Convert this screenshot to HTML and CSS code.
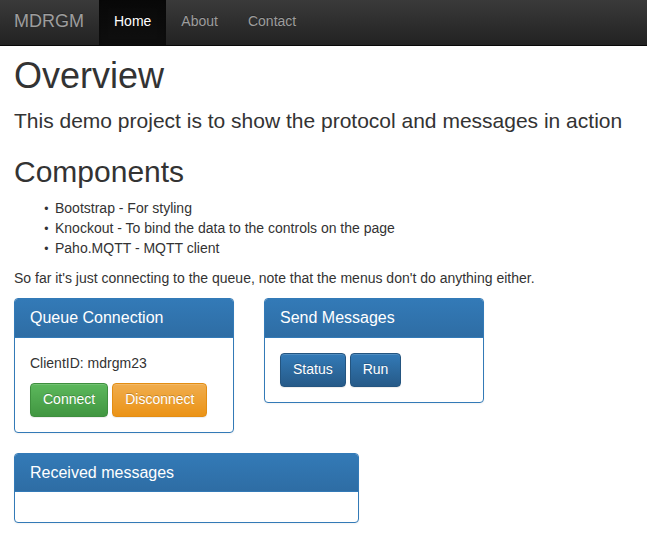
FILE: index.html
```html
<!DOCTYPE html>
<html>
<head>
<meta charset="utf-8">
<title>MDRGM</title>
<link rel="stylesheet" href="styles.css">
</head>
<body>
<nav class="navbar">
  <a class="brand" href="#">MDRGM</a>
  <ul class="nav">
    <li class="active"><a href="#">Home</a></li>
    <li><a href="#">About</a></li>
    <li><a href="#">Contact</a></li>
  </ul>
</nav>
<main class="container">
  <h1>Overview</h1>
  <p class="lead">This demo project is to show the protocol and messages in action</p>
  <h2>Components</h2>
  <ul class="list">
    <li>Bootstrap - For styling</li>
    <li>Knockout - To bind the data to the controls on the page</li>
    <li>Paho.MQTT - MQTT client</li>
  </ul>
  <p>So far it's just connecting to the queue, note that the menus don't do anything either.</p>
  <div class="row">
    <section class="panel panel-small">
      <div class="panel-heading"><h3 class="panel-title">Queue Connection</h3></div>
      <div class="panel-body">
        <p>ClientID: mdrgm23</p>
        <div class="btns">
          <button class="btn btn-success">Connect</button>
          <button class="btn btn-warning">Disconnect</button>
        </div>
      </div>
    </section>
    <section class="panel panel-small">
      <div class="panel-heading"><h3 class="panel-title">Send Messages</h3></div>
      <div class="panel-body">
        <div class="btns">
          <button class="btn btn-primary">Status</button>
          <button class="btn btn-primary">Run</button>
        </div>
      </div>
    </section>
  </div>
  <section class="panel panel-wide">
    <div class="panel-heading"><h3 class="panel-title">Received messages</h3></div>
    <div class="panel-body"></div>
  </section>
</main>
</body>
</html>
```
FILE: styles.css
```css
* { box-sizing: border-box; }
html, body { margin: 0; padding: 0; }
body {
  font-family: "Liberation Sans", Arial, sans-serif;
  font-size: 14px;
  line-height: 20px;
  color: #333;
  background: #fff;
}
.navbar {
  display: flex;
  align-items: stretch;
  height: 50px;
  margin: -4px 0 0 -1px;
  background-image: linear-gradient(to bottom, #3c3c3c 0, #222 100%);
  border-bottom: 1px solid #080808;
}
.brand {
  padding: 15px 15px;
  font-size: 18px;
  line-height: 20px;
  color: #9d9d9d;
  text-decoration: none;
  text-shadow: 0 -1px 0 rgba(0,0,0,.25);
}
.nav {
  display: flex;
  margin: 0;
  padding: 0;
  list-style: none;
}
.nav li a {
  display: block;
  padding: 15px 15px;
  height: 49px;
  line-height: 20px;
  color: #9d9d9d;
  text-decoration: none;
  text-shadow: 0 -1px 0 rgba(0,0,0,.25);
}
.nav li.active a {
  color: #fff;
  background-image: linear-gradient(to bottom, #080808 0, #0f0f0f 100%);
  box-shadow: inset 0 3px 9px rgba(0,0,0,.25);
}
.container {
  padding: 0 14px;
}
h1 {
  margin: 10px 0 10px;
  font-size: 36px;
  line-height: 1.1;
  font-weight: 500;
}
.lead {
  margin: 0 0 20px;
  font-size: 21px;
  line-height: 1.4;
  font-weight: 300;
}
h2 {
  margin: 20px 0 10px;
  font-size: 30px;
  line-height: 1.1;
  font-weight: 500;
}
p { margin: 0 0 10px; }
.list {
  margin: 0 0 10px;
  padding-left: 41px;
}
.list li::marker {
  content: "\2022   ";
  font-size: 12px;
}
.row {
  display: flex;
  gap: 30px;
  align-items: flex-start;
}
.panel {
  border: 1px solid #337ab7;
  border-radius: 4px;
  margin-bottom: 20px;
  background: #fff;
  box-shadow: 0 1px 2px rgba(0,0,0,.05);
}
.panel-small { width: 220px; }
.panel-wide { width: 345px; }
.panel-heading {
  padding: 10px 15px;
  border-bottom: 1px solid #337ab7;
  border-radius: 3px 3px 0 0;
  color: #fff;
  background-image: linear-gradient(to bottom, #337ab7 0, #2e6da4 100%);
}
.panel-title {
  margin: 0;
  font-size: 16px;
  line-height: 1.1;
  font-weight: 500;
}
.panel-body {
  padding: 15px;
  min-height: 30px;
}
.btns {
  display: flex;
  gap: 4px;
}
.btn {
  font-family: inherit;
  font-size: 14px;
  line-height: 20px;
  padding: 5px 12px 7px;
  border: 1px solid transparent;
  border-radius: 4px;
  color: #fff;
  text-shadow: 0 -1px 0 rgba(0,0,0,.2);
  box-shadow: inset 0 1px 0 rgba(255,255,255,.15), 0 1px 1px rgba(0,0,0,.075);
  cursor: pointer;
}
.btn-success {
  background-image: linear-gradient(to bottom, #5cb85c 0, #419641 100%);
  border-color: #3e8f3e;
}
.btn-warning {
  background-image: linear-gradient(to bottom, #f0ad4e 0, #eb9316 100%);
  border-color: #e38d13;
}
.btn-primary {
  background-image: linear-gradient(to bottom, #337ab7 0, #265a88 100%);
  border-color: #245580;
}
```
